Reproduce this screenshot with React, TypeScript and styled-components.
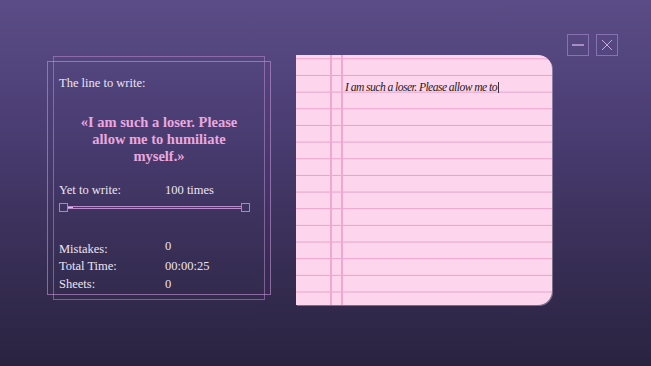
import React from 'react';
import styled, { createGlobalStyle } from 'styled-components';

const GlobalStyle = createGlobalStyle`
  html, body {
    margin: 0;
    padding: 0;
    background: #2b2441;
  }
  body {
    font-family: "Liberation Serif", "DejaVu Serif", serif;
  }
`;

const Screen = styled.div`
  width: 651px;
  height: 366px;
  overflow: hidden;
  background: linear-gradient(180deg, #5b4c87 0%, #4a3d73 35%, #3a3059 65%, #2a2340 100%);
  color: #ece4f2;
`;

const Stage = styled.div`
  display: flex;
  align-items: flex-start;
  padding: 34px 0 0 47px;
`;

// left info card with its double frame
const Panel = styled.section`
  position: relative;
  width: 224px;
  height: 234px;
  margin-top: 27px;
  box-sizing: border-box;
  border: 1px solid rgba(200, 146, 216, 0.6);
  padding: 14px 11px 0;

  &::before {
    content: '';
    position: absolute;
    top: -6px;
    bottom: -6px;
    left: 5px;
    right: 5px;
    border: 1px solid rgba(200, 146, 216, 0.5);
    pointer-events: none;
  }
`;

const Label = styled.div`
  font-size: 12.5px;
  line-height: 15px;
`;

const Quote = styled.p`
  margin: 23px 0 0;
  font-size: 14.5px;
  line-height: 17px;
  font-weight: 700;
  color: #eaa8de;
  text-align: center;
  padding: 0 6px;
`;

const Row = styled.div<{ $top?: number }>`
  display: grid;
  grid-template-columns: 106px auto;
  font-size: 12.5px;
  line-height: 17.5px;
  margin-top: ${(p) => p.$top ?? 0}px;
`;

const Value = styled.span<{ $lift?: number }>`
  position: relative;
  top: ${(p) => -(p.$lift ?? 0)}px;
`;

const Slider = styled.div`
  display: flex;
  align-items: center;
  height: 9px;
  margin-top: 3px;
  width: 191px;
`;

const Handle = styled.div`
  width: 9px;
  height: 9px;
  box-sizing: border-box;
  border: 1px solid #a887bd;
  flex: none;
`;

const Track = styled.div`
  flex: 1;
  height: 3px;
  box-sizing: border-box;
  border-top: 1px solid #b98ccb;
  border-bottom: 1px solid #b98ccb;
  background: #4a3b68;
  display: flex;
`;

const Fill = styled.div`
  height: 100%;
  background: #f0b2e2;
`;

const Stats = styled.div`
  margin-top: 29px;
`;

// notebook sheet
const Paper = styled.div`
  width: 256px;
  height: 250px;
  margin: 21px 0 0 25px;
  box-sizing: border-box;
  border-radius: 0 14px 14px 0;
  background-color: #fdd5ec;
  background-image:
    linear-gradient(90deg, transparent 34px, #f2a6d2 34px, #f2a6d2 36px, transparent 36px,
      transparent 45px, #f2a6d2 45px, #f2a6d2 47px, transparent 47px),
    linear-gradient(180deg, transparent 0, transparent 15.3px, #e8a2c9 15.3px, #e8a2c9 16.67px);
  background-size: 100% 100%, 100% 16.67px;
  background-position: 0 0, 0 4.3px;
  box-shadow: 1px 1px 0 rgba(255, 240, 250, 0.35);
  padding: 26px 0 0 49px;
  color: #1e1a22;
`;

const Written = styled.div`
  font-style: italic;
  font-size: 11.6px;
  line-height: 14px;
  letter-spacing: -0.55px;
  white-space: nowrap;
`;

const Caret = styled.span`
  display: inline-block;
  width: 0;
  height: 11px;
  margin-left: 1px;
  vertical-align: -2px;
  border-right: 1px solid #3a3040;
`;

const Controls = styled.div`
  display: flex;
  gap: 7px;
  margin-left: 15px;
`;

const ControlButton = styled.button`
  width: 22px;
  height: 22px;
  padding: 0;
  box-sizing: border-box;
  background: transparent;
  border: 1px solid #8871b0;
  display: flex;
  align-items: center;
  justify-content: center;
  cursor: pointer;
`;

const App: React.FC = () => {
  const remaining = 100;
  const done = 3;

  return (
    <Screen>
      <GlobalStyle />
      <Stage>
        <Panel>
          <Label>The line to write:</Label>
          <Quote>«I am such a loser. Please allow me to humiliate myself.»</Quote>
          <Row $top={17}>
            <span>Yet to write:</span>
            <span>{remaining} times</span>
          </Row>
          <Slider>
            <Handle />
            <Track>
              <Fill style={{ width: `${done}%` }} />
            </Track>
            <Handle />
          </Slider>
          <Stats>
            <Row>
              <span>Mistakes:</span>
              <Value $lift={3}>0</Value>
            </Row>
            <Row>
              <span>Total Time:</span>
              <Value>00:00:25</Value>
            </Row>
            <Row>
              <span>Sheets:</span>
              <Value>0</Value>
            </Row>
          </Stats>
        </Panel>

        <Paper>
          <Written>
            I am such a loser. Please allow me to
            <Caret />
          </Written>
        </Paper>

        <Controls>
          <ControlButton aria-label="Minimize">
            <svg width="14" height="14" viewBox="0 0 14 14">
              <line x1="1" y1="7" x2="13" y2="7" stroke="#d2b4ea" strokeWidth="1.3" />
            </svg>
          </ControlButton>
          <ControlButton aria-label="Close">
            <svg width="14" height="14" viewBox="0 0 14 14">
              <path d="M2 2 L12 12 M12 2 L2 12" stroke="#c6a6de" strokeWidth="1" fill="none" />
            </svg>
          </ControlButton>
        </Controls>
      </Stage>
    </Screen>
  );
};

export default App;
